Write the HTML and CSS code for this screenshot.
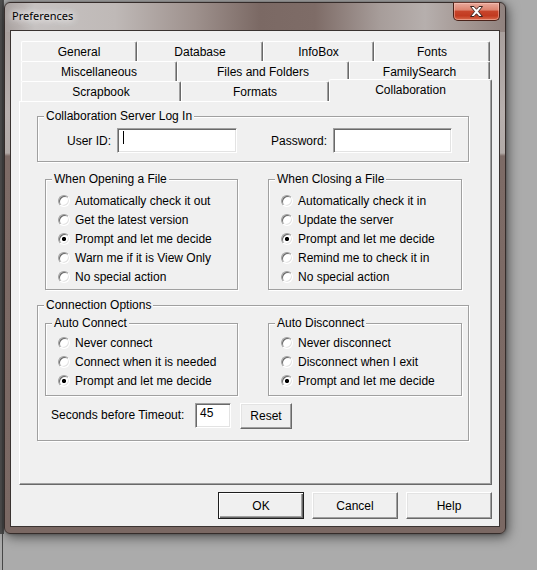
FILE: index.html
```html
<!DOCTYPE html>
<html>
<head>
<meta charset="utf-8">
<title>Preferences</title>
<link rel="stylesheet" href="styles.css">
</head>
<body>
<div class="desktop">
  <div class="strip"></div>
  <div class="window">
    <div class="titlebar">
      <span class="title">Preferences</span>
      <div class="close">
        <svg class="close-x" width="13" height="11" viewBox="0 0 13 11">
          <polygon points="0.5,0.5 4,0.5 6.5,3.3 9,0.5 12.5,0.5 8.4,5.5 12.5,10.5 9,10.5 6.5,7.7 4,10.5 0.5,10.5 4.6,5.5" fill="#ffffff" stroke="#3b2420" stroke-width="1" stroke-linejoin="round"/>
        </svg>
      </div>
    </div>
    <div class="client">
      <div class="tabs">
        <div class="tabrow">
          <div class="tab t-general">General</div>
          <div class="tab t-database">Database</div>
          <div class="tab t-infobox">InfoBox</div>
          <div class="tab t-fonts">Fonts</div>
        </div>
        <div class="tabrow">
          <div class="tab t-misc">Miscellaneous</div>
          <div class="tab t-files">Files and Folders</div>
          <div class="tab t-family">FamilySearch</div>
        </div>
        <div class="tabrow">
          <div class="tab t-scrap">Scrapbook</div>
          <div class="tab t-formats">Formats</div>
          <div class="tab t-collab sel">Collaboration</div>
        </div>
      </div>
      <div class="panel">
        <div class="group login">
          <div class="gtitle">Collaboration Server Log In</div>
          <div class="login-row">
            <span class="lbl-user">User ID:</span>
            <div class="field f-user"><span class="caret"></span></div>
            <span class="lbl-pass">Password:</span>
            <div class="field f-pass"></div>
          </div>
        </div>

        <div class="pair pair-top">
          <div class="group g-file g-left">
            <div class="gtitle">When Opening a File</div>
            <div class="radios radios-5">
              <div class="opt"><span class="dot"></span>Automatically check it out</div>
              <div class="opt"><span class="dot"></span>Get the latest version</div>
              <div class="opt"><span class="dot on"></span>Prompt and let me decide</div>
              <div class="opt"><span class="dot"></span>Warn me if it is View Only</div>
              <div class="opt"><span class="dot"></span>No special action</div>
            </div>
          </div>
          <div class="group g-file g-right">
            <div class="gtitle">When Closing a File</div>
            <div class="radios radios-5">
              <div class="opt"><span class="dot"></span>Automatically check it in</div>
              <div class="opt"><span class="dot"></span>Update the server</div>
              <div class="opt"><span class="dot on"></span>Prompt and let me decide</div>
              <div class="opt"><span class="dot"></span>Remind me to check it in</div>
              <div class="opt"><span class="dot"></span>No special action</div>
            </div>
          </div>
        </div>

        <div class="group conn">
          <div class="gtitle">Connection Options</div>
          <div class="pair pair-conn">
            <div class="group g-auto g-left">
              <div class="gtitle">Auto Connect</div>
              <div class="radios radios-3">
                <div class="opt"><span class="dot"></span>Never connect</div>
                <div class="opt"><span class="dot"></span>Connect when it is needed</div>
                <div class="opt"><span class="dot on"></span>Prompt and let me decide</div>
              </div>
            </div>
            <div class="group g-auto g-right">
              <div class="gtitle">Auto Disconnect</div>
              <div class="radios radios-3">
                <div class="opt"><span class="dot"></span>Never disconnect</div>
                <div class="opt"><span class="dot"></span>Disconnect when I exit</div>
                <div class="opt"><span class="dot on"></span>Prompt and let me decide</div>
              </div>
            </div>
          </div>
          <div class="timeout">
            <span class="lbl-time">Seconds before Timeout:</span>
            <div class="field f-time">45</div>
            <div class="btn btn-reset">Reset</div>
          </div>
        </div>
      </div>
      <div class="buttons">
        <div class="btn btn-default">OK</div>
        <div class="btn">Cancel</div>
        <div class="btn">Help</div>
      </div>
    </div>
  </div>
</div>
</body>
</html>
```

FILE: styles.css
```css
* {
  box-sizing: border-box;
}

html,
body {
  margin: 0;
}

body {
  width: 537px;
  height: 570px;
  overflow: hidden;
  background: #ababab;
  font-family: "Liberation Sans", Arial, sans-serif;
  font-size: 12px;
  color: #000;
}

.desktop {
  display: flex;
  height: 570px;
}

.strip {
  width: 4px;
  flex: none;
  background:
    linear-gradient(to right, transparent 2px, #474747 2px, #474747 3px, transparent 3px),
    linear-gradient(to bottom, #4f4f4f 0, #4f4f4f 534px, transparent 534px);
}

.window {
  flex: none;
  width: 502px;
  height: 532px;
  margin-top: 2px;
  border: 1px solid #352c2a;
  border-radius: 6px;
  padding: 0 5px 6px;
  display: flex;
  flex-direction: column;
  background:
    linear-gradient(to right, #a8a09e 0px, #c6c2c1 30px, #bfb9b7 110px, #9e918d 190px, #7b6964 255px, #7e6c67 310px, #a79d9a 375px, #b6afad 420px, #a29591 465px, #8f817d 502px) top left / 100% 29px no-repeat,
    linear-gradient(to bottom, #a39a97 0, #b7afad 110px, #b2aaa7 150px, #7d6b66 153px, #7a6863 100%);
  box-shadow: 2px 3px 12px rgba(0, 0, 0, 0.55), 0 0 3px rgba(0, 0, 0, 0.35);
}

.titlebar {
  flex: none;
  height: 27px;
  display: flex;
  align-items: flex-start;
}

.title {
  padding: 6px 0 0 2px;
  font-family: "Noto Sans", "Open Sans", sans-serif;
  font-size: 11px;
  line-height: 14px;
  color: #000;
  text-shadow: 0 0 6px #ffffff, 0 0 10px rgba(255, 255, 255, 0.9), 0 0 14px rgba(255, 255, 255, 0.7);
}

.close {
  margin-left: auto;
  margin-top: -1px;
  width: 47px;
  height: 19px;
  border: 1px solid #4a2219;
  border-top-color: #6b3a30;
  border-radius: 0 0 5px 5px;
  background: linear-gradient(to bottom, #e9aa9c 0%, #dd8470 40%, #c7442a 50%, #c23a20 75%, #d86a4c 100%);
  box-shadow: inset 0 0 0 1px rgba(255, 210, 200, 0.45);
  display: flex;
  align-items: center;
  justify-content: center;
}

.close-x {
  display: block;
  margin-top: -1px;
}

.client {
  flex: 1;
  border: 1px solid #3a3331;
  background: #f0f0f0;
  padding: 10px 7px 0 8px;
  display: flex;
  flex-direction: column;
}

/* tabs */
.tabs {
  flex: none;
  padding-left: 2px;
  display: flex;
  flex-direction: column;
}

.tabrow {
  display: flex;
  height: 20px;
}

.tab {
  flex: none;
  height: 20px;
  padding-top: 1px;
  line-height: 18px;
  text-align: center;
  background: #f0f0f0;
  border-top: 1px solid #ffffff;
  border-left: 1px solid #ffffff;
  border-right: 1px solid #696969;
  border-radius: 2px 2px 0 0;
  box-shadow: inset -1px 0 #a0a0a0;
}

.tab.sel {
  height: 23px;
  margin-top: -2px;
  margin-bottom: -1px;
  position: relative;
  z-index: 1;
}

.t-general { width: 116px; }
.t-database { width: 126px; }
.t-infobox { width: 111px; }
.t-fonts { width: 116px; }
.t-misc { width: 156px; }
.t-files { width: 172px; }
.t-family { width: 141px; }
.t-scrap { width: 160px; }
.t-formats { width: 148px; }
.t-collab { width: 163px; }

/* panel */
.panel {
  flex: none;
  height: 384px;
  border: 1px solid;
  border-color: #ffffff #696969 #696969 #ffffff;
  box-shadow: inset -1px -1px #a0a0a0;
  display: flex;
  flex-direction: column;
  align-items: flex-start;
}

.group {
  border: 1px solid #a0a0a0;
  box-shadow: 1px 1px 0 #ffffff, inset 1px 1px 0 #ffffff;
}

.gtitle {
  width: max-content;
  margin: -8px 0 0 6px;
  padding: 0 2px;
  line-height: 14px;
  background: #f0f0f0;
}

.login {
  width: 432px;
  margin: 14px 0 0 17px;
  padding-bottom: 8px;
}

.login-row {
  display: flex;
  align-items: center;
  height: 25px;
  margin-top: 5px;
}

.lbl-user {
  width: 73px;
  text-align: right;
}

.lbl-pass {
  width: 90px;
  text-align: right;
}

.field {
  flex: none;
  height: 25px;
  border: 1px solid;
  border-color: #a0a0a0 #ffffff #ffffff #a0a0a0;
  box-shadow: inset 1px 1px #696969, inset -1px -1px #e3e3e3;
  background: #ffffff;
}

.f-user {
  width: 120px;
  margin-left: 6px;
  display: flex;
  align-items: flex-start;
}

.f-pass {
  width: 119px;
  margin-left: 6px;
}

.caret {
  width: 1px;
  height: 13px;
  margin: 2px 0 0 5px;
  background: #000;
}

.pair {
  display: flex;
  gap: 30px;
}

.pair-top {
  margin: 17px 0 0 25px;
}

.g-left {
  width: 193px;
}

.g-right {
  width: 194px;
}

.g-file {
  padding-bottom: 3px;
}

.radios {
  display: flex;
  flex-direction: column;
  padding-left: 12px;
}

.radios-5 {
  height: 94px;
  margin-top: 6px;
}

.radios-3 {
  height: 56px;
  margin-top: 4px;
}

.opt {
  flex: 1;
  display: flex;
  align-items: center;
  white-space: nowrap;
}

.dot {
  flex: none;
  width: 12px;
  height: 12px;
  margin-right: 5px;
  border-radius: 50%;
  border: 1px solid;
  border-color: #a0a0a0 #ffffff #ffffff #a0a0a0;
  box-shadow: inset 1px 1px #696969, inset -1px -1px #e3e3e3;
  background: #ffffff;
}

.dot.on {
  background: radial-gradient(circle at 50% 50%, #000 0, #000 1.8px, #ffffff 2.4px);
}

.conn {
  width: 432px;
  margin: 15px 0 0 17px;
  padding-bottom: 11px;
}

.pair-conn {
  margin: 11px 0 0 7px;
}

.g-auto {
  padding-bottom: 5px;
}

.timeout {
  display: flex;
  align-items: flex-start;
  height: 26px;
  margin-top: 7px;
}

.lbl-time {
  width: 138px;
  margin-left: 13px;
  line-height: 25px;
}

.f-time {
  width: 36px;
  margin-left: 6px;
  padding: 2px 0 0 4px;
  line-height: 14px;
}

.btn {
  flex: none;
  width: 86px;
  height: 27px;
  display: flex;
  align-items: center;
  justify-content: center;
  background: #f0f0f0;
  border: 1px solid;
  border-color: #ffffff #696969 #696969 #ffffff;
  box-shadow: inset -1px -1px #a0a0a0, inset 1px 1px #e3e3e3;
}

.btn-reset {
  width: 52px;
  height: 26px;
  margin-left: 9px;
}

.btn-default {
  border-color: #1e1e1e;
  box-shadow: inset 1px 1px #ffffff, inset -1px -1px #696969, inset -2px -2px #a0a0a0;
}

.buttons {
  flex: none;
  display: flex;
  justify-content: flex-end;
  gap: 8px;
  margin-top: 7px;
}
```
